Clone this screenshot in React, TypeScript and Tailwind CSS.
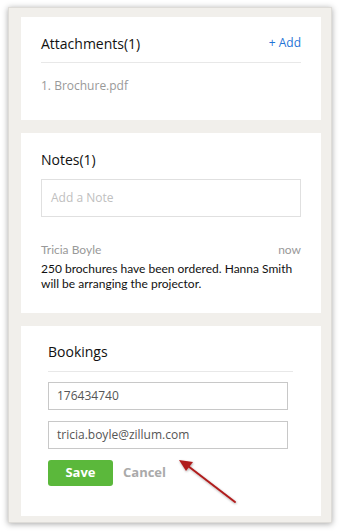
export default function App() {
  return (
    <div className="relative w-[341px] h-[532px] bg-white pt-[7px] pl-[8px]" style={{ fontFamily: '"Open Sans", sans-serif' }}>
      <div className="w-[324px] h-[516px] bg-[#f1efeb] border border-[#dedcd8] shadow-[0_1px_6px_rgba(0,0,0,0.35)] pt-[9px] pl-[12px] flex flex-col gap-[13px]">
        {/* Attachments */}
        <div className="w-[300px] h-[103px] bg-white pt-[16px] px-[20px]">
          <div className="h-[20px] flex items-center justify-between">
            <span className="text-[14px] text-[#111]">Attachments(1)</span>
            <span className="text-[12px] text-[#1f74d6]">+ Add</span>
          </div>
          <div className="mt-[9px] h-px bg-[#e8e8e8]" />
          <div className="mt-[13px] h-[20px] flex items-center text-[12px] text-[#999]">1. Brochure.pdf</div>
        </div>

        {/* Notes */}
        <div className="w-[300px] h-[180px] bg-white pt-[16px] px-[20px]">
          <div className="h-[20px] flex items-center text-[14px] text-[#111]">Notes(1)</div>
          <div className="mt-[10px] h-[38px] border border-[#e0e0e0] flex items-center px-[9px] text-[12px] text-[#c0c0c0]">
            Add a Note
          </div>
          <div className="mt-[24px] h-[18px] flex items-center justify-between text-[12px] text-[#999]" style={{ fontFamily: 'Lato, sans-serif' }}>
            <span>Tricia Boyle</span>
            <span>now</span>
          </div>
          <p className="mt-[2px] text-[12px] leading-[15px] text-[#111]" style={{ fontFamily: 'Lato, sans-serif' }}>
            250 brochures have been ordered. Hanna Smith will be arranging the projector.
          </p>
        </div>

        {/* Bookings */}
        <div className="w-[300px] h-[190px] bg-white pt-[15px] pl-[27px] pr-[28px]">
          <div className="h-[20px] flex items-center text-[14px] text-[#111]">Bookings</div>
          <div className="mt-[10px] h-px bg-[#e8e8e8]" />
          <div className="mt-[10px] w-[240px] h-[28px] border border-[#c8c8c8] flex items-center px-[8px] text-[12px] text-[#555]">
            176434740
          </div>
          <div className="mt-[11px] w-[240px] h-[28px] border border-[#c8c8c8] flex items-center px-[8px] text-[12px] text-[#555]">
            tricia.boyle@zillum.com
          </div>
          <div className="mt-[11px] flex items-center">
            <button className="w-[65px] h-[26px] rounded-[3px] bg-[#5bb83b] text-white text-[13px] font-bold">Save</button>
            <span className="ml-[10px] text-[13px] font-bold text-[#aaa]">Cancel</span>
          </div>
        </div>
      </div>

      {/* arrow annotation */}
      <svg className="absolute left-0 top-0" width="341" height="532" viewBox="0 0 341 532">
        <defs>
          <filter id="sh" x="-20%" y="-20%" width="140%" height="140%">
            <feDropShadow dx="0.5" dy="1" stdDeviation="1" floodColor="#000" floodOpacity="0.35" />
          </filter>
        </defs>
        <g filter="url(#sh)">
          <line x1="235" y1="502" x2="188" y2="466" stroke="#b01e1e" strokeWidth="2" strokeLinecap="round" />
          <polygon points="179,460 193,462 186,471" fill="#b01e1e" />
        </g>
      </svg>
    </div>
  );
}
